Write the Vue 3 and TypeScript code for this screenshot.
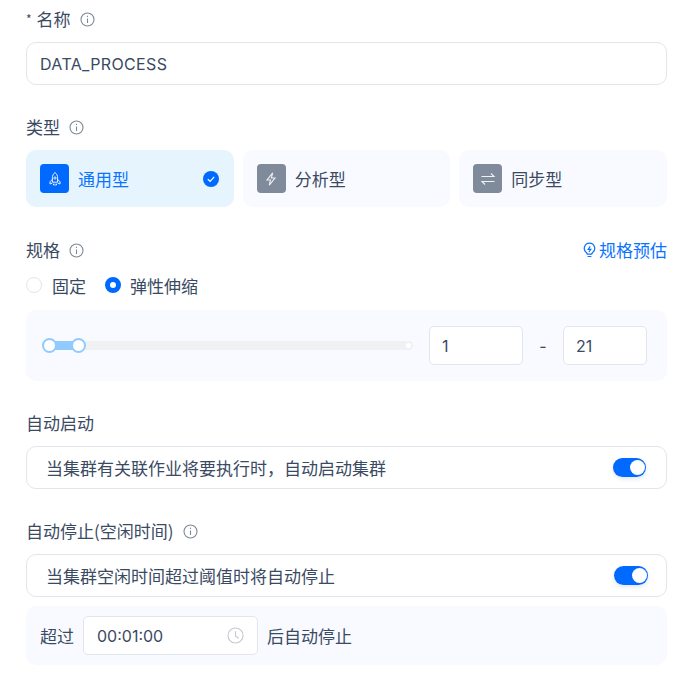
<script setup lang="ts">
interface TypeCard { name: string; active: boolean }
const cards: TypeCard[] = [
  { name: '通用型', active: true },
  { name: '分析型', active: false },
  { name: '同步型', active: false },
]
</script>

<template>
  <div class="form">
    <div class="label first"><span class="star">*</span><span>名称</span><svg class="info" viewBox="0 0 15 15"><circle cx="7.500" cy="7.500" r="6.500" /><path d="M7.500 6.500v4.500M7.500 3.800v1.300" /></svg></div>
    <div class="field"><span class="latin">DATA_PROCESS</span></div>

    <div class="label l-type"><span>类型</span><svg class="info" viewBox="0 0 15 15"><circle cx="7.500" cy="7.500" r="6.500" /><path d="M7.500 6.500v4.500M7.500 3.800v1.300" /></svg></div>
    <div class="cards">
      <div v-for="(c, i) in cards" :key="c.name" class="card" :class="{ active: c.active }">
        <div class="ico">
          <svg v-if="i === 0" viewBox="0 0 16 16" class="glyph rocket"><path d="M8 1.500c1.800 1.400 2.600 3.200 2.600 5.300v4.400H5.400V6.800c0-2.100.8-3.900 2.600-5.300zM5.400 8.300 3 10.800v2.200l2.400-1M10.600 8.300l2.400 2.500V13l-2.400-1M6.500 12.700v1.500M9.500 12.700v1.500M8 12.700v2" /><circle cx="8" cy="7" r="1.100" /></svg>
          <svg v-else-if="i === 1" viewBox="0 0 16 16" class="glyph"><path d="M9.700 1.800 4 9h3.500l-1.200 5.200L12 7H8.400z" /></svg>
          <svg v-else viewBox="0 0 16 16" class="glyph arrows"><path d="M1.500 5.500h12.500L11 2.500M14.500 10.500H2l3 3" /></svg>
        </div>
        <span class="card-name">{{ c.name }}</span>
        <svg v-if="c.active" class="check" viewBox="0 0 16 16"><circle cx="8" cy="8" r="8" fill="#0069ff" /><path d="M4.800 8.200 7.100 10.400 11.200 5.800" fill="none" stroke="#fff" stroke-width="1.200" /></svg>
      </div>
    </div>

    <div class="label l-spec">
      <span>规格</span><svg class="info" viewBox="0 0 15 15"><circle cx="7.500" cy="7.500" r="6.500" /><path d="M7.500 6.500v4.500M7.500 3.800v1.300" /></svg>
      <span class="estimate"><svg viewBox="0 0 13 16"><path d="M6.500 1.200a5.200 5.200 0 0 0-3.200 9.300c.6.500 1 1 1 1.700h4.400c0-.7.400-1.200 1-1.700a5.200 5.200 0 0 0-3.200-9.300zM4.600 14.500h3.800" /><path d="M7.200 4.300 5.200 7.300h2.600L5.900 10" /></svg>规格预估</span>
    </div>
    <div class="radios">
      <span class="radio"></span><span class="radio-text">固定</span>
      <span class="radio on"></span><span class="radio-text">弹性伸缩</span>
    </div>
    <div class="panel slider-panel">
      <div class="slider">
        <div class="track"></div>
        <div class="fill"></div>
        <div class="end"></div>
        <div class="handle h1"></div>
        <div class="handle h2"></div>
      </div>
      <div class="num n1">1</div>
      <span class="dash">-</span>
      <div class="num n2">21</div>
    </div>

    <div class="label l-start"><span>自动启动</span></div>
    <div class="field switch-row">
      <span class="cn">当集群有关联作业将要执行时，自动启动集群</span>
      <div class="switch"><i></i></div>
    </div>

    <div class="label l-stop"><span>自动停止(空闲时间)</span><svg class="info" viewBox="0 0 15 15"><circle cx="7.500" cy="7.500" r="6.500" /><path d="M7.500 6.500v4.500M7.500 3.800v1.300" /></svg></div>
    <div class="field switch-row">
      <span class="cn">当集群空闲时间超过阈值时将自动停止</span>
      <div class="switch s2"><i></i></div>
    </div>
    <div class="panel stop-panel">
      <span>超过</span>
      <div class="time">
        <span>00:01:00</span>
        <svg viewBox="0 0 17 17"><circle cx="8.500" cy="8.500" r="7.500" /><path d="M8.500 4.200V9l3 2.200" /></svg>
      </div>
      <span>后自动停止</span>
    </div>
  </div>
</template>

<style>
html, body { background: #fff; }
</style>

<style scoped>
.form {
  box-sizing: border-box;
  width: 696px;
  height: 674px;
  overflow: hidden;
  padding: 0 29px 0 26px;
  font-family: "Noto Sans CJK SC", sans-serif;
  font-size: 17px;
  color: #3a4a63;
}
.label {
  display: flex;
  align-items: center;
  height: 22px;
  line-height: 22px;
}
.first { margin-top: 8px; }
.star { font-size: 12px; margin-right: 5px; }
.info {
  width: 15px;
  height: 15px;
  margin-left: 9px;
  fill: none;
  stroke: #7e8896;
  stroke-width: 1.100;
}
.field {
  box-sizing: border-box;
  display: flex;
  align-items: center;
  width: 641px;
  height: 43px;
  border: 1px solid #e3e5ee;
  border-radius: 10px;
  background: #fff;
  padding: 0 13px;
  margin-top: 12px;
}
.latin {
  font-family: Inter, sans-serif;
  font-size: 16px;
  letter-spacing: .35px;
}
.l-type { margin-top: 31px; }
.cards {
  display: flex;
  gap: 9px;
  margin-top: 12px;
}
.card {
  box-sizing: border-box;
  flex: 1;
  height: 57px;
  border-radius: 10px;
  background: #f9faff;
  display: flex;
  align-items: center;
  padding: 0 14px;
  gap: 9px;
}
.card.active { background: #e6f4fe; color: #0b74ff; }
.ico {
  width: 29px;
  height: 29px;
  border-radius: 4px;
  background: #7f8a9b;
  display: flex;
  align-items: center;
  justify-content: center;
}
.active .ico { background: #0069ff; }
.glyph {
  width: 16px;
  height: 16px;
  fill: none;
  stroke: #eef1f5;
  stroke-width: 1.100;
}
.rocket { stroke-width: 1; }
.check { width: 16px; height: 16px; margin-left: auto; margin-right: 1px; }
.l-spec { margin-top: 32px; }
.estimate {
  margin-left: auto;
  display: flex;
  align-items: center;
  color: #0b74ff;
  gap: 3px;
}
.estimate svg {
  width: 13px;
  height: 16px;
  fill: none;
  stroke: #0b74ff;
  stroke-width: 1.200;
}
.radios {
  display: flex;
  align-items: center;
  height: 22px;
  margin-top: 13px;
}
.radio {
  box-sizing: border-box;
  width: 16px;
  height: 16px;
  border-radius: 50%;
  border: 1px solid #e3e5ee;
  background: #fff;
  margin-right: 10px;
}
.radio-text { margin-right: 19px; }
.radio.on { border: 5px solid #0069ff; margin-right: 9px; }
.panel {
  box-sizing: border-box;
  width: 641px;
  border-radius: 10px;
  background: #f9faff;
  display: flex;
  align-items: center;
}
.slider-panel { height: 71px; margin-top: 14px; padding: 0 20px 0 16px; }
.slider {
  position: relative;
  width: 371px;
  height: 9px;
  margin-right: 16px;
}
.track { position: absolute; inset: 0; border-radius: 5px; background: #f0f1f2; }
.fill { position: absolute; left: 8px; top: 0; width: 28px; height: 9px; background: #91caff; }
.end { position: absolute; right: 2px; top: 2px; width: 5px; height: 5px; border-radius: 50%; background: #fff; }
.handle {
  position: absolute;
  top: -3px;
  box-sizing: border-box;
  width: 15px;
  height: 15px;
  border-radius: 50%;
  background: #fff;
  border: 2px solid #91caff;
}
.h1 { left: 0; }
.h2 { left: 29px; }
.num {
  box-sizing: border-box;
  height: 39px;
  border: 1px solid #e3e5ee;
  border-radius: 5px;
  background: #fff;
  display: flex;
  align-items: center;
  padding: 0 12px;
  font-family: Inter, sans-serif;
  font-size: 16px;
}
.n1 { width: 94px; }
.n2 { width: 84px; }
.dash { width: 40px; text-align: center; font-family: Inter, sans-serif; font-size: 16px; }
.l-start { margin-top: 31px; }
.l-start + .field { margin-top: 12px; }
.switch-row {
  justify-content: space-between;
  padding: 0 20px 0 19px;
}
.switch {
  position: relative;
  width: 33px;
  height: 19px;
  border-radius: 10px;
  background: #0069ff;
  box-shadow: 0 2px 4px rgba(0, 40, 120, .12);
}
.s2 { margin-right: -2px; width: 34px; }
.switch i {
  position: absolute;
  right: 1px;
  top: 2px;
  width: 15px;
  height: 15px;
  border-radius: 50%;
  background: #fff;
}
.l-stop { margin-top: 31px; }
.l-stop + .field { margin-top: 12px; }
.stop-panel {
  height: 59px;
  margin-top: 9px;
  padding: 0 14px;
  gap: 9px;
}
.time {
  box-sizing: border-box;
  width: 175px;
  height: 39px;
  border: 1px solid #e3e5ee;
  border-radius: 5px;
  background: #fff;
  display: flex;
  align-items: center;
  justify-content: space-between;
  padding: 0 13px;
  font-family: Inter, sans-serif;
  font-size: 16px;
}
.time svg {
  width: 17px;
  height: 17px;
  fill: none;
  stroke: #c4c7cc;
  stroke-width: 1.100;
}
</style>
